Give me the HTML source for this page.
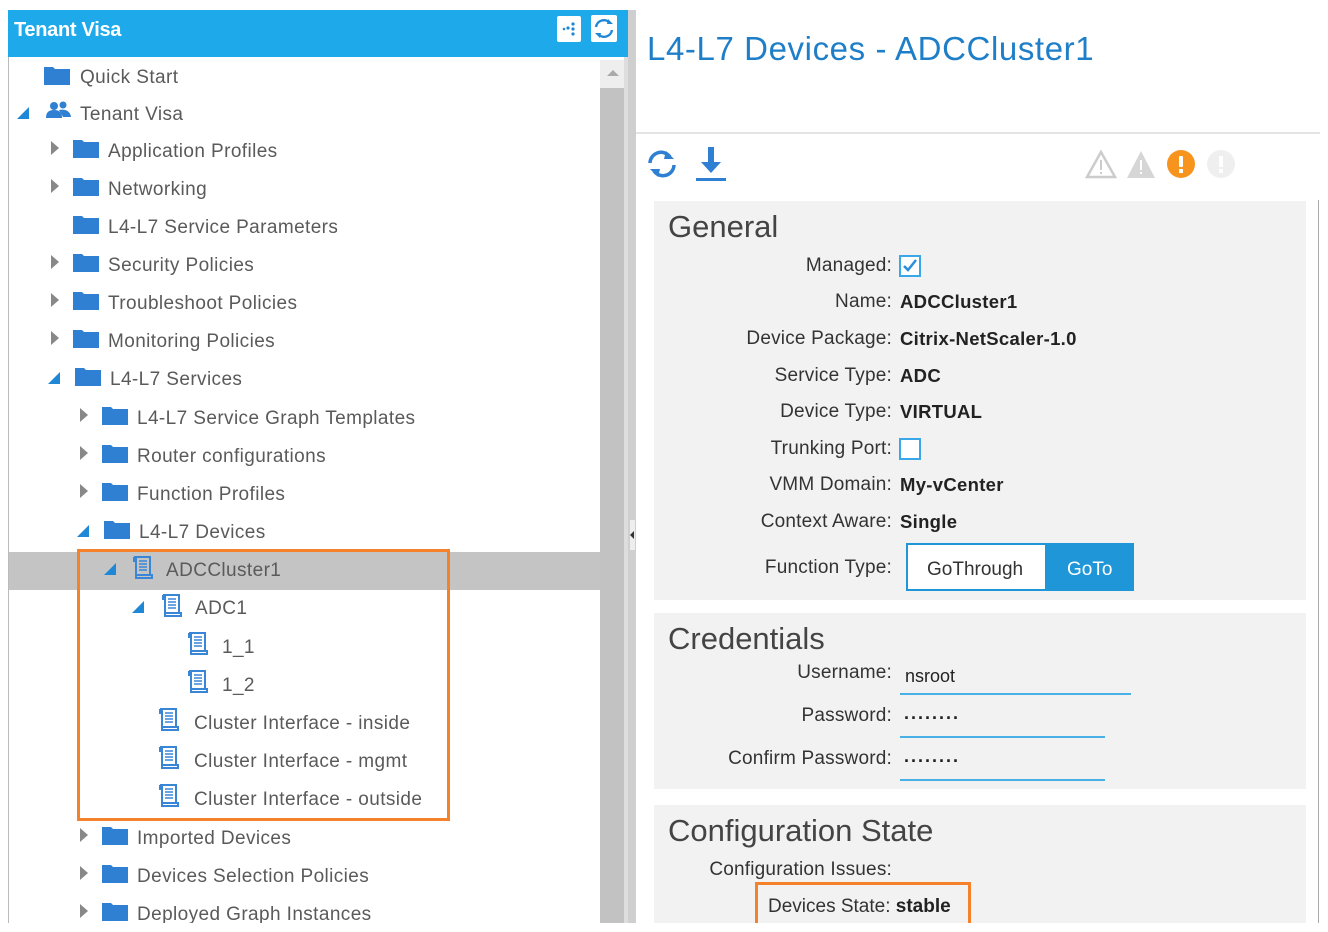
<!DOCTYPE html>
<html><head><meta charset="utf-8"><style>
*{margin:0;padding:0;box-sizing:border-box}
body{width:1328px;height:932px;background:#fff;position:relative;overflow:hidden;font-family:"Liberation Sans",sans-serif;color:#555}
.a{position:absolute}
.t{position:absolute;font-size:19px;letter-spacing:0.4px;color:#5a5a5a;white-space:nowrap;line-height:20px}
.fd{position:absolute;width:26px;height:20px}
.tri{position:absolute;width:0;height:0}
.rt{border-top:7px solid transparent;border-bottom:7px solid transparent;border-left:8px solid #888}
.dn{border-left:12px solid transparent;border-bottom:12px solid #1e88d6}
.lb{position:absolute;font-size:19px;letter-spacing:0.2px;color:#333;white-space:nowrap;text-align:right;width:300px;left:592px;line-height:20px}
.v{position:absolute;font-size:18.5px;letter-spacing:0.3px;font-weight:bold;color:#222;left:900px;white-space:nowrap;line-height:20px}
.h{position:absolute;font-size:31px;color:#444;left:668px;white-space:nowrap}
.pw{position:absolute;left:904px;font-size:18px;font-weight:bold;color:#222;letter-spacing:2px}
</style></head><body>
<svg width="0" height="0" style="position:absolute"><defs>
<symbol id="fo" viewBox="0 0 26 20"><path d="M0 2h9l2 2h15v16H0z" fill="#2f7fd2"/></symbol>
<symbol id="sc" viewBox="0 0 24 26"><g fill="none" stroke="#3a86d6" stroke-width="2"><path d="M5 3h14v18H5z"/><path d="M3 3h4M3 3v4h2M19 21h2v3H7"/><path d="M5 21v3h3"/><path d="M8 7h8M8 10h8M8 13h8M8 16h8" stroke-width="1.5"/></g></symbol>
</defs></svg>

<div class="a" style="left:8px;top:10px;width:620px;height:47px;background:#1eaaea"></div>
<div class="a" style="left:14px;top:19px;color:#fff;font-weight:bold;font-size:20px;letter-spacing:-0.3px">Tenant Visa</div>
<div class="a" style="left:557px;top:16px;width:24px;height:26px;background:#fff;border-radius:2px"><svg width="24" height="26"><g fill="#1e88d6"><circle cx="16" cy="8" r="1.6"/><circle cx="11" cy="12" r="1.6"/><circle cx="16" cy="13" r="1.6"/><circle cx="16" cy="18" r="1.6"/><circle cx="7" cy="13" r="1.3"/></g></svg></div>
<div class="a" style="left:591px;top:15px;width:26px;height:27px;background:#fff;border-radius:2px"><svg width="26" height="27"><g fill="none" stroke="#1e88d6" stroke-width="2.4"><path d="M5 12a8 8 0 0 1 14-4"/><path d="M21 15a8 8 0 0 1-14 4"/></g><path d="M17 4l5 5h-6z M9 23l-5-5h6z" fill="#1e88d6"/></svg></div>

<div class="a" style="left:8px;top:57px;width:1px;height:866px;background:#bbb"></div>
<div class="a" style="left:600px;top:60px;width:24px;height:863px;background:#c2c2c2"></div>
<div class="a" style="left:600px;top:60px;width:24px;height:28px;background:#eee"></div>
<div class="tri" style="left:607px;top:70px;border-left:6px solid transparent;border-right:6px solid transparent;border-bottom:6px solid #aaa"></div>
<div class="a" style="left:624px;top:57px;width:4px;height:866px;background:#ddd"></div>
<div class="a" style="left:628px;top:10px;width:8px;height:913px;background:#cfcfcf"></div>
<div class="a" style="left:630px;top:520px;width:5px;height:30px;background:#eee"></div>
<div class="tri" style="left:630px;top:531px;border-top:4px solid transparent;border-bottom:4px solid transparent;border-right:4px solid #333"></div>

<div class="a" style="left:9px;top:552px;width:591px;height:38px;background:#c4c4c4"></div>

<svg class="fd" style="left:44px;top:65px"><use href="#fo"/></svg><div class="t" style="left:80px;top:68px">Quick Start</div>
<div class="tri dn" style="left:17px;top:107px"></div>
<svg class="a" style="left:45px;top:100px" width="28" height="22"><g fill="#2f7fd2"><circle cx="9" cy="6" r="4"/><path d="M1 18c0-6 3-8 8-8s8 2 8 8z"/><circle cx="18" cy="5" r="3.5"/><path d="M14 10c5-1 11 0 12 7h-8z"/></g></svg>
<div class="t" style="left:80px;top:105px">Tenant Visa</div>

<div class="tri rt" style="left:51px;top:141px"></div><svg class="fd" style="left:73px;top:138px"><use href="#fo"/></svg><div class="t" style="left:108px;top:142px">Application Profiles</div>
<div class="tri rt" style="left:51px;top:179px"></div><svg class="fd" style="left:73px;top:176px"><use href="#fo"/></svg><div class="t" style="left:108px;top:180px">Networking</div>
<svg class="fd" style="left:73px;top:214px"><use href="#fo"/></svg><div class="t" style="left:108px;top:218px">L4-L7 Service Parameters</div>
<div class="tri rt" style="left:51px;top:255px"></div><svg class="fd" style="left:73px;top:252px"><use href="#fo"/></svg><div class="t" style="left:108px;top:256px">Security Policies</div>
<div class="tri rt" style="left:51px;top:293px"></div><svg class="fd" style="left:73px;top:290px"><use href="#fo"/></svg><div class="t" style="left:108px;top:294px">Troubleshoot Policies</div>
<div class="tri rt" style="left:51px;top:331px"></div><svg class="fd" style="left:73px;top:328px"><use href="#fo"/></svg><div class="t" style="left:108px;top:332px">Monitoring Policies</div>
<div class="tri dn" style="left:48px;top:372px"></div><svg class="fd" style="left:75px;top:366px"><use href="#fo"/></svg><div class="t" style="left:110px;top:370px">L4-L7 Services</div>

<div class="tri rt" style="left:80px;top:408px"></div><svg class="fd" style="left:102px;top:405px"><use href="#fo"/></svg><div class="t" style="left:137px;top:409px">L4-L7 Service Graph Templates</div>
<div class="tri rt" style="left:80px;top:446px"></div><svg class="fd" style="left:102px;top:443px"><use href="#fo"/></svg><div class="t" style="left:137px;top:447px">Router configurations</div>
<div class="tri rt" style="left:80px;top:484px"></div><svg class="fd" style="left:102px;top:481px"><use href="#fo"/></svg><div class="t" style="left:137px;top:485px">Function Profiles</div>
<div class="tri dn" style="left:77px;top:525px"></div><svg class="fd" style="left:104px;top:519px"><use href="#fo"/></svg><div class="t" style="left:139px;top:523px">L4-L7 Devices</div>

<div class="tri dn" style="left:104px;top:563px"></div><svg class="a" style="left:131px;top:554px" width="24" height="26"><use href="#sc"/></svg><div class="t" style="left:166px;top:561px">ADCCluster1</div>
<div class="tri dn" style="left:132px;top:601px"></div><svg class="a" style="left:160px;top:592px" width="24" height="26"><use href="#sc"/></svg><div class="t" style="left:195px;top:599px">ADC1</div>
<svg class="a" style="left:186px;top:630px" width="24" height="26"><use href="#sc"/></svg><div class="t" style="left:222px;top:638px">1_1</div>
<svg class="a" style="left:186px;top:668px" width="24" height="26"><use href="#sc"/></svg><div class="t" style="left:222px;top:676px">1_2</div>
<svg class="a" style="left:157px;top:706px" width="24" height="26"><use href="#sc"/></svg><div class="t" style="left:194px;top:714px">Cluster Interface - inside</div>
<svg class="a" style="left:157px;top:744px" width="24" height="26"><use href="#sc"/></svg><div class="t" style="left:194px;top:752px">Cluster Interface - mgmt</div>
<svg class="a" style="left:157px;top:782px" width="24" height="26"><use href="#sc"/></svg><div class="t" style="left:194px;top:790px">Cluster Interface - outside</div>

<div class="a" style="left:77px;top:549px;width:373px;height:272px;border:3px solid #f5822a"></div>

<div class="tri rt" style="left:80px;top:828px"></div><svg class="fd" style="left:102px;top:825px"><use href="#fo"/></svg><div class="t" style="left:137px;top:829px">Imported Devices</div>
<div class="tri rt" style="left:80px;top:866px"></div><svg class="fd" style="left:102px;top:863px"><use href="#fo"/></svg><div class="t" style="left:137px;top:867px">Devices Selection Policies</div>
<div class="tri rt" style="left:80px;top:904px"></div><svg class="fd" style="left:102px;top:901px"><use href="#fo"/></svg><div class="t" style="left:137px;top:905px">Deployed Graph Instances</div>
<div class="a" style="left:0;top:923px;width:1328px;height:9px;background:#fff"></div>

<div class="a" style="left:647px;top:30px;font-size:33px;letter-spacing:0.6px;color:#1e7fc8;white-space:nowrap">L4-L7 Devices - ADCCluster1</div>
<div class="a" style="left:636px;top:132px;width:684px;height:2px;background:#e4e4e4"></div>
<div class="a" style="left:1318px;top:200px;width:1px;height:723px;background:#aaa"></div>
<svg class="a" style="left:645px;top:148px" width="36" height="32"><g fill="none" stroke="#2f7fd2" stroke-width="3.5"><path d="M5 15a11 11 0 0 1 20-6"/><path d="M29 17a11 11 0 0 1-20 6"/></g><path d="M21 3l8 8h-10z M13 29l-8-8h10z" fill="#2f7fd2"/></svg>
<svg class="a" style="left:694px;top:145px" width="34" height="38"><path d="M14 2h6v15h7l-10 11-10-11h7z" fill="#2f7fd2"/><rect x="2" y="33" width="30" height="3" fill="#2f7fd2"/></svg>
<svg class="a" style="left:1085px;top:149px" width="32" height="30"><path d="M16 3L2 28h28z" fill="none" stroke="#ccc" stroke-width="2.5"/><path d="M15 11h2v10h-2zM15 23h2v2h-2z" fill="#ccc"/></svg>
<svg class="a" style="left:1125px;top:149px" width="32" height="30"><path d="M16 2L2 29h28z" fill="#d6d6d6"/><path d="M15 11h2v10h-2zM15 23h2v2h-2z" fill="#fff"/></svg>
<svg class="a" style="left:1166px;top:149px" width="30" height="30"><circle cx="15" cy="15" r="14" fill="#f7941d"/><rect x="13" y="7" width="4" height="11" rx="1" fill="#fff"/><rect x="13" y="20" width="4" height="4" fill="#fff"/></svg>
<svg class="a" style="left:1206px;top:149px" width="30" height="30"><circle cx="15" cy="15" r="14" fill="#efefef"/><rect x="13" y="7" width="4" height="11" fill="#fff"/><rect x="13" y="20" width="4" height="4" fill="#fff"/></svg>

<div class="a" style="left:654px;top:201px;width:652px;height:399px;background:#f2f2f2"></div>
<div class="a" style="left:654px;top:613px;width:652px;height:176px;background:#f2f2f2"></div>
<div class="a" style="left:654px;top:805px;width:652px;height:118px;background:#f2f2f2"></div>

<div class="h" style="top:209px">General</div>
<div class="lb" style="top:256px">Managed:</div>
<div class="a" style="left:899px;top:255px;width:22px;height:22px;border:2px solid #3aa7e8;background:#fff"><svg width="18" height="18"><path d="M3 9l4 4 8-10" fill="none" stroke="#2c8ddb" stroke-width="2.5"/></svg></div>
<div class="lb" style="top:292px">Name:</div><div class="v" style="top:292px">ADCCluster1</div>
<div class="lb" style="top:329px">Device Package:</div><div class="v" style="top:329px">Citrix-NetScaler-1.0</div>
<div class="lb" style="top:366px">Service Type:</div><div class="v" style="top:366px">ADC</div>
<div class="lb" style="top:402px">Device Type:</div><div class="v" style="top:402px">VIRTUAL</div>
<div class="lb" style="top:439px">Trunking Port:</div>
<div class="a" style="left:899px;top:438px;width:22px;height:22px;border:2px solid #3aa7e8;background:#fff"></div>
<div class="lb" style="top:475px">VMM Domain:</div><div class="v" style="top:475px">My-vCenter</div>
<div class="lb" style="top:512px">Context Aware:</div><div class="v" style="top:512px">Single</div>
<div class="lb" style="top:558px">Function Type:</div>
<div class="a" style="left:906px;top:543px;width:228px;height:48px;border:2px solid #1e96d8;background:#fff"></div>
<div class="a" style="left:1045px;top:543px;width:89px;height:48px;background:#1e96d8"></div>
<div class="a" style="left:927px;top:559px;font-size:19px;color:#333">GoThrough</div>
<div class="a" style="left:1067px;top:559px;font-size:19px;color:#fff">GoTo</div>

<div class="h" style="top:621px">Credentials</div>
<div class="lb" style="top:663px">Username:</div><div class="a" style="left:905px;top:666px;font-size:18px;color:#222">nsroot</div>
<div class="a" style="left:900px;top:693px;width:231px;height:2px;background:#4ab1e6"></div>
<div class="lb" style="top:706px">Password:</div><div class="pw" style="top:703px">........</div>
<div class="a" style="left:900px;top:736px;width:205px;height:2px;background:#4ab1e6"></div>
<div class="lb" style="top:749px">Confirm Password:</div><div class="pw" style="top:746px">........</div>
<div class="a" style="left:900px;top:779px;width:205px;height:2px;background:#4ab1e6"></div>

<div class="h" style="top:813px">Configuration State</div>
<div class="lb" style="top:860px">Configuration Issues:</div>
<div class="a" style="left:755px;top:882px;width:216px;height:45px;border:3px solid #f5822a"></div>
<div class="a" style="left:768px;top:896px;font-size:19px;color:#333;white-space:nowrap">Devices State: <b style="color:#222">stable</b></div>
<div class="a" style="left:0;top:923px;width:1328px;height:9px;background:#fff"></div>
</body></html>
